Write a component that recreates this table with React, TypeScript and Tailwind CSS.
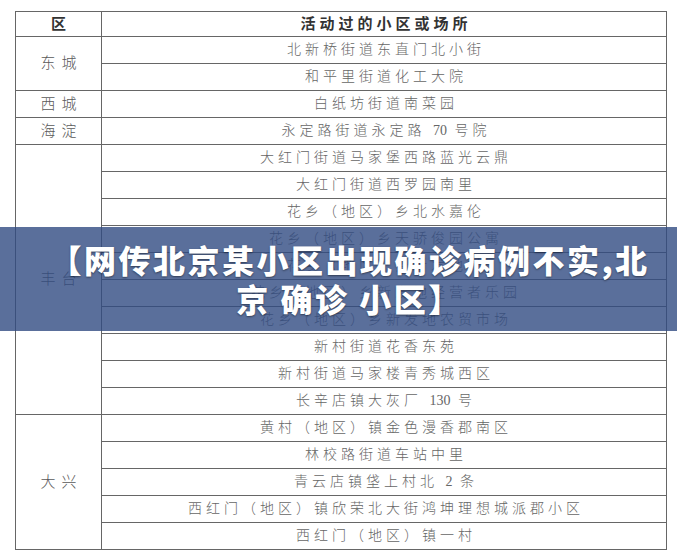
import React from "react";

type Row = { district?: string; span?: number; place: string };

const rows: Row[] = [
  { district: "东城", span: 2, place: "北新桥街道东直门北小街" },
  { place: "和平里街道化工大院" },
  { district: "西城", span: 1, place: "白纸坊街道南菜园" },
  { district: "海淀", span: 1, place: "永定路街道永定路 70 号院" },
  { district: "丰台", span: 10, place: "大红门街道马家堡西路蓝光云鼎" },
  { place: "大红门街道西罗园南里" },
  { place: "花乡（地区）乡北水嘉伦" },
  { place: "花乡（地区）乡天骄俊园公寓" },
  { place: "花乡（地区）乡新发地村" },
  { place: "花乡（地区）乡新发地经营者乐园" },
  { place: "花乡（地区）乡新发地农贸市场" },
  { place: "新村街道花香东苑" },
  { place: "新村街道马家楼青秀城西区" },
  { place: "长辛店镇大灰厂 130 号" },
  { district: "大兴", span: 5, place: "黄村（地区）镇金色漫香郡南区" },
  { place: "林校路街道车站中里" },
  { place: "青云店镇垡上村北 2 条" },
  { place: "西红门（地区）镇欣荣北大街鸿坤理想城派郡小区" },
  { place: "西红门（地区）镇一村" },
];

// digits sit tight in the original, only the CJK is spaced out
function Place({ text }: { text: string }) {
  const parts = text.split(/(\d+)/);
  return (
    <>
      {parts.map((p, i) =>
        /^\d+$/.test(p) ? (
          <span key={i} className="tracking-normal">
            {p}
          </span>
        ) : (
          <span key={i}>{p}</span>
        )
      )}
    </>
  );
}

export default function App() {
  return (
    <div className="relative w-[677px] h-[559px] overflow-hidden bg-white">
      <div className="pt-[11px] pl-[15px]">
        <table
          className="w-[652px] border-collapse text-[#666] font-light"
          style={{ fontFamily: '"Liberation Serif", "Noto Sans CJK SC", serif' }}
        >
          <thead>
            <tr className="h-[25px]">
              <th className="w-[86px] border-[1.5px] border-[#666] text-[15px] font-bold text-[#333] leading-none">
                区
              </th>
              <th className="border-[1.5px] border-[#666] text-[15px] font-bold text-[#333] tracking-[4px] pl-[4px] leading-none">
                活动过的小区或场所
              </th>
            </tr>
          </thead>
          <tbody>
            {rows.map((r, i) => (
              <tr key={i} className="h-[27px]">
                {r.district && (
                  <td
                    rowSpan={r.span}
                    className="border-[1.5px] border-[#666] text-center text-[15px] text-[#5a5a5a] tracking-[6px] pl-[6px] leading-none"
                  >
                    {r.district}
                  </td>
                )}
                <td className="border-[1.5px] border-[#666] text-center text-[14px] tracking-[4px] pl-[4px] leading-none">
                  <Place text={r.place} />
                </td>
              </tr>
            ))}
          </tbody>
        </table>
      </div>

      {/* headline banner laid over the table */}
      <div className="absolute left-0 top-[227px] w-full h-[104px] bg-[rgba(49,75,130,0.8)] flex items-center justify-center pl-[22px]">
        <p
          className="text-center text-white text-[32px] font-black tracking-[2.5px] leading-[39px] [text-shadow:0_1px_2px_rgba(0,0,0,0.45)]"
          style={{ fontFamily: '"Noto Sans CJK SC", sans-serif' }}
        >
          【网传北京某小区出现确诊病例不实,北
          <br />
          京 确诊 小区】
        </p>
      </div>
    </div>
  );
}
